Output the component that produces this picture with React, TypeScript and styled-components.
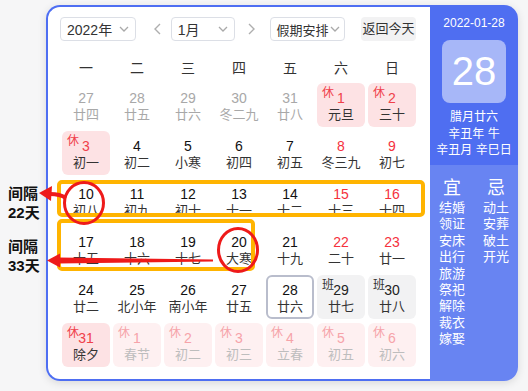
import React from 'react';
import styled, { createGlobalStyle } from 'styled-components';

const GlobalStyle = createGlobalStyle`
  html, body {
    margin: 0;
    padding: 0;
    background: #f6f6f7;
  }
  body {
    font-family: "Liberation Sans", "Noto Sans CJK SC", sans-serif;
  }
`;

const Page = styled.div`
  position: relative;
  width: 528px;
  height: 391px;
  padding: 5px 0 0 46px;
  box-sizing: border-box;
`;

const Card = styled.div`
  display: flex;
  width: 472px;
  height: 376px;
  border-radius: 14px;
  background: #fff;
  box-shadow: 0 2px 8px rgba(0, 0, 0, 0.12);
`;

const Main = styled.div`
  width: 384px;
  box-sizing: border-box;
  border: 2px solid #4e6ef2;
  border-right: none;
  border-radius: 14px 0 0 14px;
  padding: 10px 14px 0 12px;
`;

const Toolbar = styled.div`
  display: flex;
  align-items: center;
  height: 24px;
`;

const Select = styled.div<{ $w: number; $small?: boolean }>`
  display: flex;
  align-items: center;
  justify-content: space-between;
  width: ${p => p.$w}px;
  height: 24px;
  box-sizing: border-box;
  border: 1px solid #dcdfe6;
  border-radius: 4px;
  padding: 0 ${p => (p.$small ? 4 : 6)}px 0 ${p => (p.$small ? 5 : 6)}px;
  font-size: ${p => (p.$small ? 13 : 14)}px;
  color: #333;
  background: #fff;
  white-space: nowrap;

  svg {
    flex-shrink: 0;
  }
`;

const NavArrow = styled.div<{ $ml: number; $mr: number }>`
  display: flex;
  align-items: center;
  justify-content: center;
  width: 14px;
  height: 24px;
  margin: 0 ${p => p.$mr}px 0 ${p => p.$ml}px;
`;

const TodayButton = styled.div`
  margin-left: 16px;
  width: 55px;
  height: 24px;
  line-height: 24px;
  text-align: center;
  border-radius: 4px;
  background: #f2f2f3;
  font-size: 13px;
  color: #333;
  white-space: nowrap;
`;

const WeekRow = styled.div`
  display: grid;
  grid-template-columns: repeat(7, 48px);
  column-gap: 3px;
  margin-top: 15px;
  padding-left: 2px;
  height: 24px;
  line-height: 24px;
  text-align: center;
  font-size: 14px;
  color: #333;
`;

const DayGrid = styled.div`
  display: grid;
  grid-template-columns: repeat(7, 48px);
  grid-auto-rows: 44px;
  column-gap: 3px;
  row-gap: 4px;
  margin-top: 3px;
  padding-left: 2px;
`;

type Kind = 'prev' | 'normal' | 'weekend' | 'rest' | 'restFaded' | 'work' | 'today';

const numColor: Record<Kind, string> = {
  prev: '#a8a8a8',
  normal: '#111',
  weekend: '#f5313d',
  rest: '#f0404a',
  restFaded: '#f6a3a9',
  work: '#222',
  today: '#111',
};

const cellBg: Record<Kind, string> = {
  prev: 'transparent',
  normal: 'transparent',
  weekend: 'transparent',
  rest: '#fde2e4',
  restFaded: '#fef0f1',
  work: '#f2f2f3',
  today: '#fff',
};

const Cell = styled.div<{ $kind: Kind }>`
  position: relative;
  box-sizing: border-box;
  border-radius: 6px;
  text-align: center;
  padding-top: ${p => (p.$kind === 'today' ? 4 : 6)}px;
  background: ${p => cellBg[p.$kind]};
  border: ${p => (p.$kind === 'today' ? '2px solid #b9bdcc' : 'none')};
`;

const DayNum = styled.div<{ $kind: Kind }>`
  font-size: 14px;
  line-height: 18px;
  color: ${p => numColor[p.$kind]};
`;

const Lunar = styled.div<{ $kind: Kind }>`
  font-size: 13px;
  line-height: 16px;
  color: ${p => (p.$kind === 'prev' ? '#a8a8a8' : p.$kind === 'restFaded' ? '#bdbdbd' : '#333')};
`;

const Badge = styled.span<{ $kind: Kind }>`
  position: absolute;
  top: 3px;
  left: 5px;
  font-size: 12px;
  line-height: 14px;
  color: ${p => (p.$kind === 'work' ? '#333' : numColor[p.$kind])};
`;

const Side = styled.div`
  display: flex;
  flex-direction: column;
  width: 88px;
  border-radius: 0 14px 14px 0;
  overflow: hidden;
  color: #fff;
`;

const SideTop = styled.div`
  display: flex;
  flex-direction: column;
  align-items: center;
  height: 160px;
  box-sizing: border-box;
  padding-top: 10px;
  background: #4f6ef1;
`;

const DateText = styled.div`
  font-size: 12px;
  line-height: 16px;
`;

const BigDay = styled.div`
  margin-top: 9px;
  width: 64px;
  height: 63px;
  border-radius: 8px;
  background: rgba(255, 255, 255, 0.5);
  font-size: 40px;
  line-height: 63px;
  text-align: center;
`;

const LunarInfo = styled.div`
  margin-top: 6px;
  font-size: 12px;
  line-height: 16.5px;
  text-align: center;
`;

const SideBottom = styled.div`
  flex: 1;
  display: grid;
  grid-template-columns: 44px 44px;
  padding-top: 12px;
  background: #6884f2;
`;

const Column = styled.div`
  display: flex;
  flex-direction: column;
  align-items: center;
`;

const ColHead = styled.div`
  font-size: 18px;
  line-height: 22px;
  margin-bottom: 1px;
`;

const ColItem = styled.div`
  font-size: 13px;
  line-height: 16.4px;
`;

const Overlay = styled.svg`
  position: absolute;
  left: 0;
  top: 0;
  pointer-events: none;
`;

const Note = styled.div<{ $top: number }>`
  position: absolute;
  left: 8px;
  top: ${p => p.$top}px;
  font-size: 15px;
  line-height: 19px;
  font-weight: 700;
  color: #111;
`;

const Chevron = () => (
  <svg width="10" height="6" viewBox="0 0 10 6">
    <path d="M1 1 L5 5 L9 1" fill="none" stroke="#a9a9a9" strokeWidth="1.3" />
  </svg>
);

const Arrow = ({ dir }: { dir: 'left' | 'right' }) => (
  <svg width="7" height="12" viewBox="0 0 7 12">
    <path
      d={dir === 'left' ? 'M6 1 L1 6 L6 11' : 'M1 1 L6 6 L1 11'}
      fill="none"
      stroke="#aeaeae"
      strokeWidth="1.4"
    />
  </svg>
);

type Day = { n: number; l: string; k: Kind; b?: string };

const days: Day[] = [
  { n: 27, l: '廿四', k: 'prev' },
  { n: 28, l: '廿五', k: 'prev' },
  { n: 29, l: '廿六', k: 'prev' },
  { n: 30, l: '冬二九', k: 'prev' },
  { n: 31, l: '廿八', k: 'prev' },
  { n: 1, l: '元旦', k: 'rest', b: '休' },
  { n: 2, l: '三十', k: 'rest', b: '休' },
  { n: 3, l: '初一', k: 'rest', b: '休' },
  { n: 4, l: '初二', k: 'normal' },
  { n: 5, l: '小寒', k: 'normal' },
  { n: 6, l: '初四', k: 'normal' },
  { n: 7, l: '初五', k: 'normal' },
  { n: 8, l: '冬三九', k: 'weekend' },
  { n: 9, l: '初七', k: 'weekend' },
  { n: 10, l: '初八', k: 'normal' },
  { n: 11, l: '初九', k: 'normal' },
  { n: 12, l: '初十', k: 'normal' },
  { n: 13, l: '十一', k: 'normal' },
  { n: 14, l: '十二', k: 'normal' },
  { n: 15, l: '十三', k: 'weekend' },
  { n: 16, l: '十四', k: 'weekend' },
  { n: 17, l: '十五', k: 'normal' },
  { n: 18, l: '十六', k: 'normal' },
  { n: 19, l: '十七', k: 'normal' },
  { n: 20, l: '大寒', k: 'normal' },
  { n: 21, l: '十九', k: 'normal' },
  { n: 22, l: '二十', k: 'weekend' },
  { n: 23, l: '廿一', k: 'weekend' },
  { n: 24, l: '廿二', k: 'normal' },
  { n: 25, l: '北小年', k: 'normal' },
  { n: 26, l: '南小年', k: 'normal' },
  { n: 27, l: '廿五', k: 'normal' },
  { n: 28, l: '廿六', k: 'today' },
  { n: 29, l: '廿七', k: 'work', b: '班' },
  { n: 30, l: '廿八', k: 'work', b: '班' },
  { n: 31, l: '除夕', k: 'rest', b: '休' },
  { n: 1, l: '春节', k: 'restFaded', b: '休' },
  { n: 2, l: '初二', k: 'restFaded', b: '休' },
  { n: 3, l: '初三', k: 'restFaded', b: '休' },
  { n: 4, l: '立春', k: 'restFaded', b: '休' },
  { n: 5, l: '初五', k: 'restFaded', b: '休' },
  { n: 6, l: '初六', k: 'restFaded', b: '休' },
];

const good = ['结婚', '领证', '安床', '出行', '旅游', '祭祀', '解除', '裁衣', '嫁娶'];
const bad = ['动土', '安葬', '破土', '开光'];

export default function App() {
  return (
    <Page>
      <GlobalStyle />
      <Card>
        <Main>
          <Toolbar>
            <Select $w={76}>
              <span>2022年</span>
              <Chevron />
            </Select>
            <NavArrow $ml={15} $mr={6}>
              <Arrow dir="left" />
            </NavArrow>
            <Select $w={64}>
              <span>1月</span>
              <Chevron />
            </Select>
            <NavArrow $ml={10} $mr={12}>
              <Arrow dir="right" />
            </NavArrow>
            <Select $w={75} $small>
              <span>假期安排</span>
              <Chevron />
            </Select>
            <TodayButton>返回今天</TodayButton>
          </Toolbar>
          <WeekRow>
            {['一', '二', '三', '四', '五', '六', '日'].map(w => (
              <div key={w}>{w}</div>
            ))}
          </WeekRow>
          <DayGrid>
            {days.map((d, i) => (
              <Cell key={i} $kind={d.k}>
                {d.b && <Badge $kind={d.k}>{d.b}</Badge>}
                <DayNum $kind={d.k}>{d.n}</DayNum>
                <Lunar $kind={d.k}>{d.l}</Lunar>
              </Cell>
            ))}
          </DayGrid>
        </Main>
        <Side>
          <SideTop>
            <DateText>2022-01-28</DateText>
            <BigDay>28</BigDay>
            <LunarInfo>
              <div>腊月廿六</div>
              <div>辛丑年 牛</div>
              <div>辛丑月 辛巳日</div>
            </LunarInfo>
          </SideTop>
          <SideBottom>
            <Column>
              <ColHead>宜</ColHead>
              {good.map(g => (
                <ColItem key={g}>{g}</ColItem>
              ))}
            </Column>
            <Column>
              <ColHead>忌</ColHead>
              {bad.map(g => (
                <ColItem key={g}>{g}</ColItem>
              ))}
            </Column>
          </SideBottom>
        </Side>
      </Card>

      <Overlay width="528" height="391" viewBox="0 0 528 391">
        <rect x="59" y="182" width="364" height="33" rx="3" fill="none" stroke="#ffb400" strokeWidth="4" />
        <rect x="59" y="221" width="194" height="48" rx="3" fill="none" stroke="#ffb400" strokeWidth="4" />
        <ellipse cx="84" cy="203" rx="19.5" ry="20.5" fill="none" stroke="#ee1a1a" strokeWidth="3" />
        <ellipse cx="238" cy="250" rx="19.5" ry="21.5" fill="none" stroke="#ee1a1a" strokeWidth="3" />
        <path d="M66 198 Q60 194 50 194" fill="none" stroke="#ee1a1a" strokeWidth="4" />
        <polygon points="39,193 52,186 51,201" fill="#ee1a1a" />
        <polygon points="213,259.5 213,261.5 58,263.5 58,257.5" fill="#ee1a1a" />
        <polygon points="47,260.5 60,253.5 60,267.5" fill="#ee1a1a" />
      </Overlay>
      <Note $top={184}>
        间隔
        <br />
        22天
      </Note>
      <Note $top={237}>
        间隔
        <br />
        33天
      </Note>
    </Page>
  );
}
